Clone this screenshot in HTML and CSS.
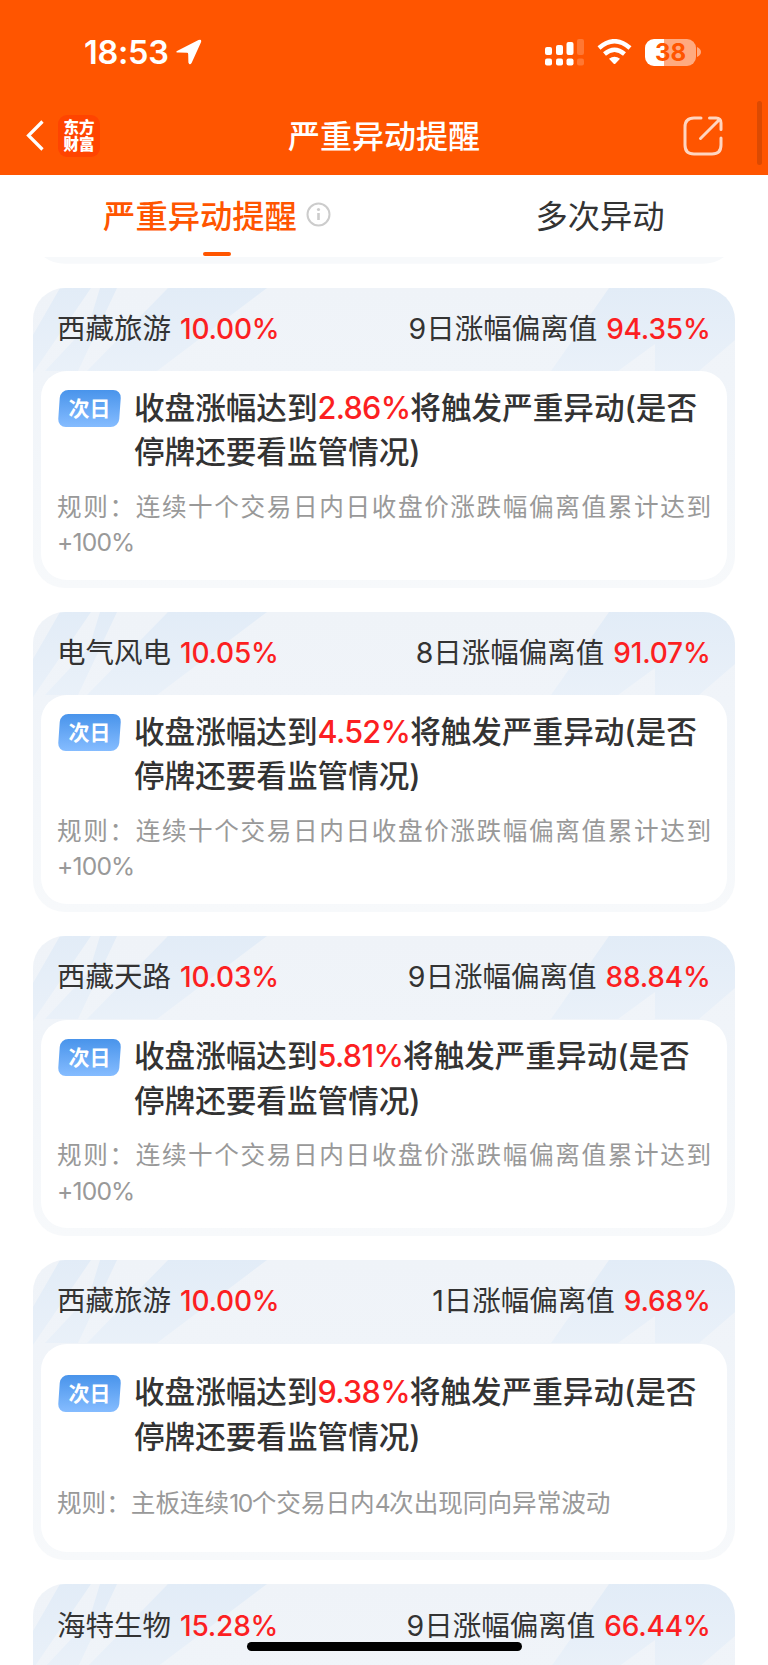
FILE: index.html
```html
<!DOCTYPE html>
<html lang="zh-CN">
<head>
  <meta charset="UTF-8" />
  <meta name="viewport" content="width=device-width, initial-scale=1.0"/>
  <title>严重异动提醒</title>
  <link rel="stylesheet" href="styles.css">
</head>
<body>
  <div class="screen">
    <header class="header">
      <div class="status-bar">
        <div class="clock">
          <span>18:53</span>
          <svg width="26" height="26" viewBox="0 0 26 26"><path d="M1 12 22.500 1Q26 -.2 25 3.200L15.600 24Q13.600 26.800 12.400 23.400L12.200 15.200Q12.200 13.800 11 13.800L2.600 13.600Q-1 13.600 1 12Z" fill="#fff"/></svg>
        </div>
        <div class="status-icons">
          <svg width="40" height="28" viewBox="0 0 40 28" fill="#fff">
            <rect x="1" y="9" width="7" height="8" rx="2"/><rect x="12" y="7" width="7" height="10" rx="2"/><rect x="22.500" y="4" width="7" height="13" rx="2"/><rect x="33" y="1" width="7" height="16" rx="2" opacity=".2"/>
            <rect x="1" y="20.500" width="7" height="7" rx="2"/><rect x="12" y="20.500" width="7" height="7" rx="2"/><rect x="22.500" y="20.500" width="7" height="7" rx="2"/><rect x="33" y="20.500" width="7" height="7" rx="2" opacity=".2"/>
          </svg>
          <svg class="wifi" width="35" height="26" viewBox="0 0 35 26">
            <g fill="none" stroke="#fff" stroke-width="4.500"><path d="M2 9Q17.500 -4.500 33 9"/><path d="M7.500 15Q17.500 6.500 27.500 15"/></g>
            <path d="M12 19.800Q17.500 15.500 23 19.800L18.300 24.700Q17.500 25.300 16.700 24.700Z" fill="#fff"/>
          </svg>
          <div class="battery"><span>38</span></div>
          <svg class="battery-tip" width="4" height="10" viewBox="0 0 4 10"><path d="M0 0Q4 2 4 5T0 10Z" fill="#fff" opacity=".5"/></svg>
        </div>
      </div>
      <div class="nav-bar">
        <div class="nav-left">
          <svg width="18" height="32" viewBox="0 0 18 32"><path d="M16.500 1.500 2.500 15.500 16.500 29.500" fill="none" stroke="#fff" stroke-width="3.200"/></svg>
          <div class="logo">东方<br>财富</div>
        </div>
        <h1>严重异动提醒</h1>
        <svg class="share" width="40" height="40" viewBox="0 0 40 40" fill="none" stroke="#ffd5c0" stroke-width="3" stroke-linecap="round" stroke-linejoin="round"><path d="M18 2H11Q2 2 2 11V29Q2 38 11 38H29Q38 38 38 29V22"/><path d="M26.500 2H33Q38 2 38 7V13.500M36 4 17.500 22.500"/></svg>
        <div class="scroll-thumb"></div>
      </div>
    </header>

    <nav class="tabs">
      <div class="tab active">
        <span>严重异动提醒</span>
        <svg class="info" width="25" height="25" viewBox="0 0 25 25"><circle cx="12.500" cy="12.500" r="11" fill="none" stroke="#ccc" stroke-width="2"/><circle cx="12.500" cy="7.500" r="1.600" fill="#ccc"/><path d="M12.500 11V18" stroke="#ccc" stroke-width="2.600"/></svg>
      </div>
      <div class="tab">多次异动</div>
    </nav>

    <main class="list">
      <div class="card-tail"></div>

      <section class="card">
        <div class="card-head">
          <div>西藏旅游<b>10.00%</b></div>
          <div><i>9</i>日涨幅偏离值<b>94.35%</b></div>
        </div>
        <div class="card-body">
          <div class="alert">
            <span class="badge"><em>次日</em></span>
            <p>收盘涨幅达到<b>2.86%</b>将触发严重异动(是否停牌还要看监管情况)</p>
          </div>
          <p class="rule">规则：连续十个交易日内日收盘价涨跌幅偏离值累计达到<span>+100%</span></p>
        </div>
      </section>

      <section class="card">
        <div class="card-head">
          <div>电气风电<b>10.05%</b></div>
          <div><i>8</i>日涨幅偏离值<b>91.07%</b></div>
        </div>
        <div class="card-body">
          <div class="alert">
            <span class="badge"><em>次日</em></span>
            <p>收盘涨幅达到<b>4.52%</b>将触发严重异动(是否停牌还要看监管情况)</p>
          </div>
          <p class="rule">规则：连续十个交易日内日收盘价涨跌幅偏离值累计达到<span>+100%</span></p>
        </div>
      </section>

      <section class="card">
        <div class="card-head">
          <div>西藏天路<b>10.03%</b></div>
          <div><i>9</i>日涨幅偏离值<b>88.84%</b></div>
        </div>
        <div class="card-body">
          <div class="alert">
            <span class="badge"><em>次日</em></span>
            <p>收盘涨幅达到<b>5.81%</b>将触发严重异动(是否停牌还要看监管情况)</p>
          </div>
          <p class="rule">规则：连续十个交易日内日收盘价涨跌幅偏离值累计达到<span>+100%</span></p>
        </div>
      </section>

      <section class="card">
        <div class="card-head">
          <div>西藏旅游<b>10.00%</b></div>
          <div><i>1</i>日涨幅偏离值<b>9.68%</b></div>
        </div>
        <div class="card-body short">
          <div class="alert">
            <span class="badge"><em>次日</em></span>
            <p>收盘涨幅达到<b>9.38%</b>将触发严重异动(是否停牌还要看监管情况)</p>
          </div>
          <p class="rule">规则：主板连续<span>10</span>个交易日内<span>4</span>次出现同向异常波动</p>
        </div>
      </section>

      <section class="card">
        <div class="card-head">
          <div>海特生物<b>15.28%</b></div>
          <div><i>9</i>日涨幅偏离值<b>66.44%</b></div>
        </div>
        <div class="card-body"></div>
      </section>
    </main>
    <div class="home-bar"></div>
  </div>
</body>
</html>
```

FILE: styles.css
```css
* { box-sizing: border-box; }
body { margin: 0; background: #fff; color: #333; font-family: Inter, "Noto Sans CJK SC", sans-serif; }
h1, p { margin: 0; }
b, i, em { font-style: normal; font-weight: 500; }
svg { display: block; flex: none; }
.screen { position: relative; width: 768px; height: 1665px; overflow: hidden; display: flex; flex-direction: column; }

.header { flex: none; height: 175px; background: #ff5500; color: #fff; }
.status-bar { height: 97px; padding: 7px 67px 0 84px; display: flex; justify-content: space-between; align-items: center; }
.clock { display: flex; align-items: center; gap: 7px; font-size: 32.500px; font-weight: 600; letter-spacing: -0.3px; }
.status-icons { display: flex; align-items: center; }
.wifi { margin-left: 13px; }
.battery { margin-left: 13px; width: 51px; height: 27px; border-radius: 9px; background: linear-gradient(90deg, #fff 38%, #ffaa80 38%); color: #ff5500; font-size: 24px; font-weight: 700; line-height: 28px; text-align: center; }
.battery-tip { margin-left: 1px; }

.nav-bar { position: relative; height: 78px; padding: 0 45px 1px 26px; display: flex; justify-content: space-between; align-items: center; }
.nav-left { width: 85px; display: flex; align-items: center; gap: 14px; }
.logo { width: 42px; height: 42px; padding-top: 3px; border-radius: 9px; background: #ff4400; font: 900 15.500px/17.500px "Noto Sans CJK SC", sans-serif; text-align: center; }
h1 { padding-top: 2px; font-size: 32px; font-weight: 500; line-height: 44px; }
.share { margin-left: 26px; }
.scroll-thumb { position: absolute; right: 6px; top: 4px; width: 5px; height: 64px; border-radius: 3px; background: #dc4a02; }

.tabs { flex: none; height: 82px; display: flex; }
.tab { position: relative; width: 336px; margin-left: 48px; height: 82px; display: flex; justify-content: center; font-size: 32.300px; line-height: 84px; }
.tab.active { width: 384px; margin-left: 0; padding-left: 50px; gap: 9px; color: #ff5500; font-weight: 500; }
.tab.active::after { content: ""; position: absolute; left: 203px; bottom: 1px; width: 28px; height: 4px; border-radius: 2px; background: #ff5500; }
.info { margin-top: 27px; }

.list { display: flex; flex-direction: column; gap: 24.100px; padding: 0 33px; }
.card-tail { flex: none; height: 6.800px; margin: 0; background: #f7f9fb; clip-path: path("M11 0H691Q682 6.800 670 6.800H32Q20 6.800 11 0Z"); }
.card {
  flex: none; height: 300px; padding: 0 8px 8px; border-radius: 32px; display: flex; flex-direction: column;
  background:
    url("data:image/svg+xml,%3Csvg xmlns='http://www.w3.org/2000/svg' width='702' height='110'%3E%3Cdefs%3E%3ClinearGradient id='a' gradientUnits='userSpaceOnUse' x1='0' y1='0' x2='0' y2='90'%3E%3Cstop stop-color='%23e2ecf7'/%3E%3Cstop offset='1' stop-color='%23eaf1f9'/%3E%3C/linearGradient%3E%3C/defs%3E%3Cg fill='url(%23a)'%3E%3Cpath d='M27 0H58L0 85V47Z'/%3E%3Cpath d='M67 0H84L45 83H12L56 36Z'/%3E%3Cpath d='M135 0H234L124 83H54Z'/%3E%3Cpath d='M576 0H702V52L666 83H622V56L585 83H518Z'/%3E%3C/g%3E%3C/svg%3E") no-repeat,
    linear-gradient(#eff3f8 0, #f0f4f9 30%, #f7f9fb 100%);
}
.card-head { flex: none; height: 83.500px; padding: 0 16.500px 6px 16px; display: flex; justify-content: space-between; align-items: center; font-size: 28.500px; }
.card-head b { margin-left: 9px; color: #fc1f22; font-size: 28px; letter-spacing: -0.2px; }
.card-head i { font-weight: 400; }
.card-body { flex: 1; padding: 14.500px 16px 0; border-radius: 26px; background: #fff; }
.alert { display: flex; gap: 14px; font-size: 30.600px; font-weight: 500; line-height: 44.500px; }
.alert b { color: #fc1f22; letter-spacing: -0.7px; }
.badge { flex: none; width: 61px; height: 37px; margin: 4.500px 0 0 2px; border-radius: 8px; transform: skewX(-4deg); background: linear-gradient(#4994eb, #85bcff); color: #fff; font-size: 21px; line-height: 37px; text-align: center; }
.badge em { display: block; transform: skewX(4deg); font-weight: 700; }
.rule { margin-top: 15px; color: #999; font-size: 24.600px; line-height: 35.500px; text-align: justify; }
.rule span { letter-spacing: -0.8px; }
.card-body.short { padding-top: 26.500px; }
.short .rule { margin-top: 27px; text-align: left; }
.short .rule span { letter-spacing: -1.500px; }
.home-bar { position: absolute; left: 246.500px; bottom: 14.500px; width: 275px; height: 9px; border-radius: 5px; background: #000; }
```
